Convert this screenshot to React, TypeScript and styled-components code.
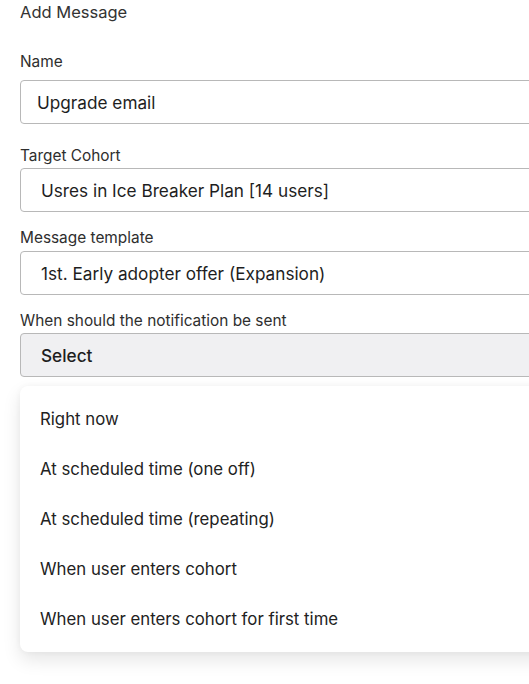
import React from "react";
import styled, { createGlobalStyle } from "styled-components";

const GlobalStyle = createGlobalStyle`
  html, body {
    margin: 0;
    padding: 0;
    background: #ffffff;
    overflow: hidden;
  }
  body {
    font-family: Inter, "Liberation Sans", Arial, sans-serif;
    color: #222;
  }
`;

const options = [
  "Right now",
  "At scheduled time (one off)",
  "At scheduled time (repeating)",
  "When user enters cohort",
  "When user enters cohort for first time",
];

const App = () => {
  return (
    <>
      <GlobalStyle />
      <Page>
        <Title>Add Message</Title>

        <Label top={30} gap={8}>
          Name
        </Label>
        <Input pad={16}>Upgrade email</Input>

        <Label top={22} gap={2}>
          Target Cohort
        </Label>
        <Input pad={20}>Usres in Ice Breaker Plan [14 users]</Input>

        <Label top={16} gap={3}>
          Message template
        </Label>
        <Input pad={20}>1st. Early adopter offer (Expansion)</Input>

        <Label top={16} gap={2}>
          When should the notification be sent
        </Label>
        <Input pad={20} muted>
          Select
        </Input>

        <Menu>
          {options.map((o) => (
            <Item key={o}>{o}</Item>
          ))}
        </Menu>
      </Page>
    </>
  );
};

export default App;

const Page = styled.div`
  box-sizing: border-box;
  width: 100vw;
  overflow: hidden;
  padding: 2px 0 40px 20px;
  display: flex;
  flex-direction: column;
`;

const Title = styled.div`
  font-size: 16.5px;
  line-height: 20px;
  color: #333;
`;

const Label = styled.div<{ top: number; gap: number }>`
  font-size: 15.4px;
  line-height: 20px;
  color: #2e2e2e;
  margin-top: ${(p) => p.top}px;
  margin-bottom: ${(p) => p.gap}px;
`;

const Input = styled.div<{ pad: number; muted?: boolean }>`
  box-sizing: border-box;
  flex-shrink: 0;
  height: 44px;
  width: calc(100% + 40px);
  display: flex;
  align-items: center;
  padding-left: ${(p) => p.pad}px;
  border: 1px solid #b8b8b8;
  border-radius: 4px;
  background: ${(p) => (p.muted ? "#f0f0f2" : "#ffffff")};
  font-size: 17.2px;
  font-weight: ${(p) => (p.muted ? 500 : 400)};
  color: #1e1e1e;
`;

const Menu = styled.div`
  margin-top: 9px;
  width: calc(100% + 40px);
  box-sizing: border-box;
  padding: 8px 0;
  background: #ffffff;
  border-radius: 8px;
  box-shadow: 0 8px 18px rgba(0, 0, 0, 0.1), 0 0 6px rgba(0, 0, 0, 0.04);
`;

const Item = styled.div`
  height: 50px;
  display: flex;
  align-items: center;
  padding-left: 20px;
  font-size: 16.8px;
  color: #222;
`;
